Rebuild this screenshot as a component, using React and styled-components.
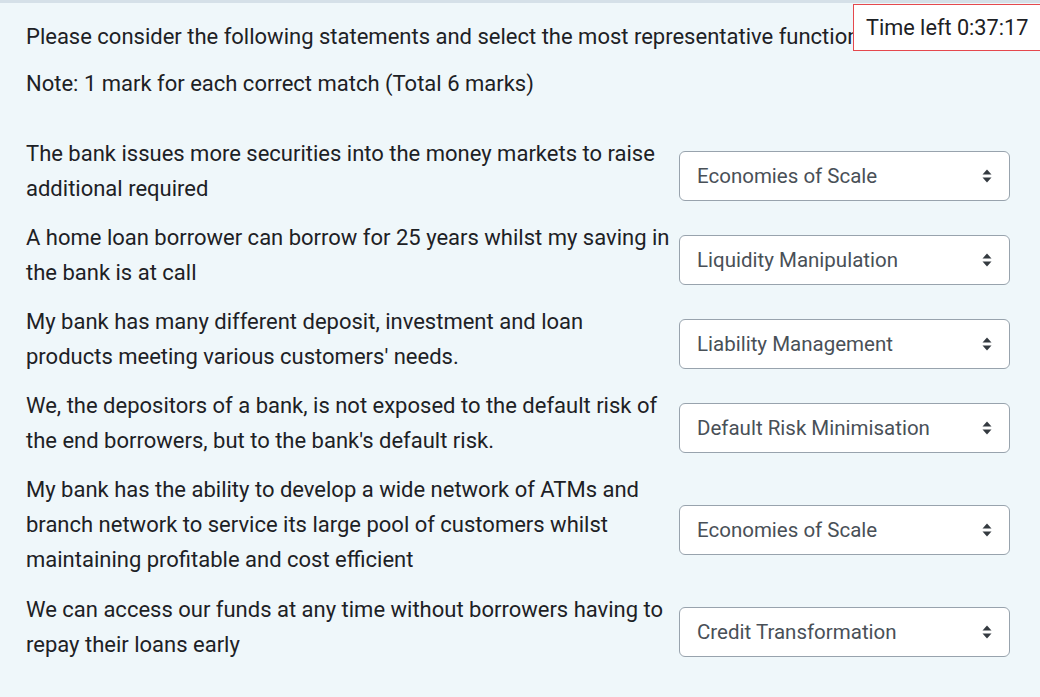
import React from 'react';
import styled, { createGlobalStyle } from 'styled-components';

const GlobalStyle = createGlobalStyle`
  html, body {
    margin: 0;
    padding: 0;
    background: #eff7fa;
  }
  body {
    font-family: Roboto, "Noto Sans", sans-serif;
    color: #1d2125;
  }
`;

const options = [
  'Choose...',
  'Economies of Scale',
  'Liquidity Manipulation',
  'Liability Management',
  'Default Risk Minimisation',
  'Credit Transformation',
];

const rows = [
  {
    text: 'The bank issues more securities into the money markets to raise additional required',
    answer: 'Economies of Scale',
  },
  {
    text: 'A home loan borrower can borrow for 25 years whilst my saving in the bank is at call',
    answer: 'Liquidity Manipulation',
  },
  {
    text: "My bank has many different deposit, investment and loan products meeting various customers' needs.",
    answer: 'Liability Management',
  },
  {
    text: "We, the depositors of a bank, is not exposed to the default risk of the end borrowers, but to the bank's default risk.",
    answer: 'Default Risk Minimisation',
  },
  {
    text: 'My bank has the ability to develop a wide network of ATMs and branch network to service its large pool of customers whilst maintaining profitable and cost efficient',
    answer: 'Economies of Scale',
  },
  {
    text: 'We can access our funds at any time without borrowers having to repay their loans early',
    answer: 'Credit Transformation',
  },
];

function App() {
  return (
    <Page>
      <GlobalStyle />
      <Timer>Time left 0:37:17</Timer>
      <Intro>Please consider the following statements and select the most representative function of banks.</Intro>
      <Intro>Note: 1 mark for each correct match (Total 6 marks)</Intro>
      <Matches>
        {rows.map((row, i) => (
          <MatchRow key={i}>
            <Statement>{row.text}</Statement>
            <SelectWrap>
              <Select defaultValue={row.answer}>
                {options.map((o) => (
                  <option key={o} value={o}>{o}</option>
                ))}
              </Select>
              <Arrows width="10" height="14" viewBox="0 0 10 14">
                <path d="M5 0.5 L9.5 5.5 H0.5 Z" fill="#343a40" />
                <path d="M5 13.5 L9.5 8.5 H0.5 Z" fill="#343a40" />
              </Arrows>
            </SelectWrap>
          </MatchRow>
        ))}
      </Matches>
    </Page>
  );
}

const Page = styled.div`
  position: relative;
  box-sizing: border-box;
  min-height: 100vh;
  border-top: 3px solid #d5e0e8;
  padding: 16px 30px 20px 26px;
  overflow: hidden;
  background: #eff7fa;
`;

const Timer = styled.div`
  position: absolute;
  top: 1px;
  left: 853px;
  width: 200px;
  height: 47px;
  box-sizing: border-box;
  padding: 0 12px;
  display: flex;
  align-items: center;
  background: #fff;
  border: 1px solid #e5484d;
  font-size: 21.7px;
  color: #1d2125;
  z-index: 2;
`;

const Intro = styled.p`
  margin: 0 0 12px;
  font-size: 22px;
  line-height: 35px;
  white-space: nowrap;
`;

const Matches = styled.div`
  display: flex;
  flex-direction: column;
  gap: 14.2px;
  margin-top: 34.6px;
`;

const MatchRow = styled.div`
  display: grid;
  grid-template-columns: 1fr 331px;
  column-gap: 9px;
  align-items: center;
`;

const Statement = styled.div`
  font-size: 22px;
  line-height: 35px;
`;

const SelectWrap = styled.div`
  position: relative;
  margin-top: 10px;
`;

const Select = styled.select`
  appearance: none;
  -webkit-appearance: none;
  width: 100%;
  height: 50px;
  box-sizing: border-box;
  padding: 0 40px 0 17px;
  border: 1px solid #98a3ad;
  border-radius: 6px;
  background: #fff;
  font-family: Roboto, "Noto Sans", sans-serif;
  font-size: 20.5px;
  color: #495057;
  outline: none;
`;

const Arrows = styled.svg`
  position: absolute;
  right: 18px;
  top: 18px;
  pointer-events: none;
`;

export default App;
